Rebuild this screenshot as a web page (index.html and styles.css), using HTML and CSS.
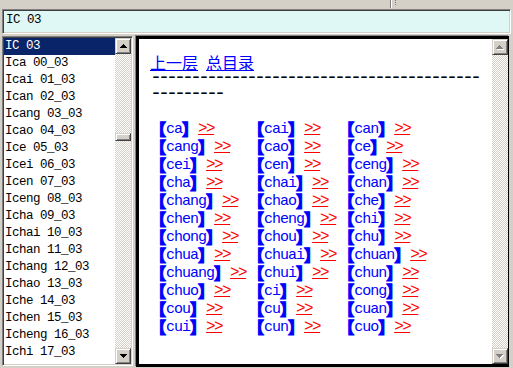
FILE: index.html
```html
<!DOCTYPE html>
<html>
<head>
<meta charset="utf-8">
<title>IC 03</title>
<link rel="stylesheet" href="styles.css">
</head>
<body>
<div class="topbar"><div class="sep"></div><div class="grip"></div></div>
<div class="addr">IC 03</div>
<div class="main">
  <div class="listbox">
    <ul class="list">
      <li class="sel">IC 03</li>
      <li>Ica 00_03</li>
      <li>Icai 01_03</li>
      <li>Ican 02_03</li>
      <li>Icang 03_03</li>
      <li>Icao 04_03</li>
      <li>Ice 05_03</li>
      <li>Icei 06_03</li>
      <li>Icen 07_03</li>
      <li>Iceng 08_03</li>
      <li>Icha 09_03</li>
      <li>Ichai 10_03</li>
      <li>Ichan 11_03</li>
      <li>Ichang 12_03</li>
      <li>Ichao 13_03</li>
      <li>Iche 14_03</li>
      <li>Ichen 15_03</li>
      <li>Icheng 16_03</li>
      <li>Ichi 17_03</li>
    </ul>
    <div class="vscroll">
      <div class="btn"><svg width="7" height="4" viewBox="0 0 7 4"><path d="M3 0h1v1H3zM2 1h3v1H2zM1 2h5v1H1zM0 3h7v1H0z" fill="#000"/></svg></div>
      <div class="track"><div class="thumb"></div></div>
      <div class="btn"><svg width="7" height="4" viewBox="0 0 7 4"><path d="M0 0h7v1H0zM1 1h5v1H1zM2 2h3v1H2zM3 3h1v1H3z" fill="#000"/></svg></div>
    </div>
  </div>
  <div class="view">
    <div class="page">
      <div class="nav"><a href="#">上一层</a><span class="m"> </span><a href="#">总目录</a></div>
      <div class="dash">--------------------------------------------------</div>
      <div class="grid">
        <div class="cell"><span class="b"><span class="br">【</span>ca<span class="br">】</span></span><a class="go" href="#">&gt;&gt;</a></div>
        <div class="cell"><span class="b"><span class="br">【</span>cai<span class="br">】</span></span><a class="go" href="#">&gt;&gt;</a></div>
        <div class="cell"><span class="b"><span class="br">【</span>can<span class="br">】</span></span><a class="go" href="#">&gt;&gt;</a></div>
        <div class="cell"><span class="b"><span class="br">【</span>cang<span class="br">】</span></span><a class="go" href="#">&gt;&gt;</a></div>
        <div class="cell"><span class="b"><span class="br">【</span>cao<span class="br">】</span></span><a class="go" href="#">&gt;&gt;</a></div>
        <div class="cell"><span class="b"><span class="br">【</span>ce<span class="br">】</span></span><a class="go" href="#">&gt;&gt;</a></div>
        <div class="cell"><span class="b"><span class="br">【</span>cei<span class="br">】</span></span><a class="go" href="#">&gt;&gt;</a></div>
        <div class="cell"><span class="b"><span class="br">【</span>cen<span class="br">】</span></span><a class="go" href="#">&gt;&gt;</a></div>
        <div class="cell"><span class="b"><span class="br">【</span>ceng<span class="br">】</span></span><a class="go" href="#">&gt;&gt;</a></div>
        <div class="cell"><span class="b"><span class="br">【</span>cha<span class="br">】</span></span><a class="go" href="#">&gt;&gt;</a></div>
        <div class="cell"><span class="b"><span class="br">【</span>chai<span class="br">】</span></span><a class="go" href="#">&gt;&gt;</a></div>
        <div class="cell"><span class="b"><span class="br">【</span>chan<span class="br">】</span></span><a class="go" href="#">&gt;&gt;</a></div>
        <div class="cell"><span class="b"><span class="br">【</span>chang<span class="br">】</span></span><a class="go" href="#">&gt;&gt;</a></div>
        <div class="cell"><span class="b"><span class="br">【</span>chao<span class="br">】</span></span><a class="go" href="#">&gt;&gt;</a></div>
        <div class="cell"><span class="b"><span class="br">【</span>che<span class="br">】</span></span><a class="go" href="#">&gt;&gt;</a></div>
        <div class="cell"><span class="b"><span class="br">【</span>chen<span class="br">】</span></span><a class="go" href="#">&gt;&gt;</a></div>
        <div class="cell"><span class="b"><span class="br">【</span>cheng<span class="br">】</span></span><a class="go" href="#">&gt;&gt;</a></div>
        <div class="cell"><span class="b"><span class="br">【</span>chi<span class="br">】</span></span><a class="go" href="#">&gt;&gt;</a></div>
        <div class="cell"><span class="b"><span class="br">【</span>chong<span class="br">】</span></span><a class="go" href="#">&gt;&gt;</a></div>
        <div class="cell"><span class="b"><span class="br">【</span>chou<span class="br">】</span></span><a class="go" href="#">&gt;&gt;</a></div>
        <div class="cell"><span class="b"><span class="br">【</span>chu<span class="br">】</span></span><a class="go" href="#">&gt;&gt;</a></div>
        <div class="cell"><span class="b"><span class="br">【</span>chua<span class="br">】</span></span><a class="go" href="#">&gt;&gt;</a></div>
        <div class="cell"><span class="b"><span class="br">【</span>chuai<span class="br">】</span></span><a class="go" href="#">&gt;&gt;</a></div>
        <div class="cell"><span class="b"><span class="br">【</span>chuan<span class="br">】</span></span><a class="go" href="#">&gt;&gt;</a></div>
        <div class="cell"><span class="b"><span class="br">【</span>chuang<span class="br">】</span></span><a class="go" href="#">&gt;&gt;</a></div>
        <div class="cell"><span class="b"><span class="br">【</span>chui<span class="br">】</span></span><a class="go" href="#">&gt;&gt;</a></div>
        <div class="cell"><span class="b"><span class="br">【</span>chun<span class="br">】</span></span><a class="go" href="#">&gt;&gt;</a></div>
        <div class="cell"><span class="b"><span class="br">【</span>chuo<span class="br">】</span></span><a class="go" href="#">&gt;&gt;</a></div>
        <div class="cell"><span class="b"><span class="br">【</span>ci<span class="br">】</span></span><a class="go" href="#">&gt;&gt;</a></div>
        <div class="cell"><span class="b"><span class="br">【</span>cong<span class="br">】</span></span><a class="go" href="#">&gt;&gt;</a></div>
        <div class="cell"><span class="b"><span class="br">【</span>cou<span class="br">】</span></span><a class="go" href="#">&gt;&gt;</a></div>
        <div class="cell"><span class="b"><span class="br">【</span>cu<span class="br">】</span></span><a class="go" href="#">&gt;&gt;</a></div>
        <div class="cell"><span class="b"><span class="br">【</span>cuan<span class="br">】</span></span><a class="go" href="#">&gt;&gt;</a></div>
        <div class="cell"><span class="b"><span class="br">【</span>cui<span class="br">】</span></span><a class="go" href="#">&gt;&gt;</a></div>
        <div class="cell"><span class="b"><span class="br">【</span>cun<span class="br">】</span></span><a class="go" href="#">&gt;&gt;</a></div>
        <div class="cell"><span class="b"><span class="br">【</span>cuo<span class="br">】</span></span><a class="go" href="#">&gt;&gt;</a></div>
      </div>
    </div>
    <div class="vscroll dis">
      <div class="btn"><svg width="8" height="5" viewBox="0 0 8 5"><path d="M4 1h1v1H4zM3 2h3v1H3zM2 3h5v1H2zM1 4h7v1H1z" fill="#fff"/><path d="M3 0h1v1H3zM2 1h3v1H2zM1 2h5v1H1zM0 3h7v1H0z" fill="#808080"/></svg></div>
      <div class="track"></div>
      <div class="btn"><svg width="8" height="5" viewBox="0 0 8 5"><path d="M1 1h7v1H1zM2 2h5v1H2zM3 3h3v1H3zM4 4h1v1H4z" fill="#fff"/><path d="M0 0h7v1H0zM1 1h5v1H1zM2 2h3v1H2zM3 3h1v1H3z" fill="#808080"/></svg></div>
    </div>
  </div>
</div>
</body>
</html>
```

FILE: styles.css
```css
* { box-sizing: border-box; }
html, body {
  margin: 0;
  padding: 0;
}
body {
  width: 513px;
  height: 368px;
  overflow: hidden;
  background: #d4d0c8;
  font-family: "Liberation Mono", monospace;
}

.topbar {
  height: 9px;
  display: flex;
  align-items: flex-start;
}
.sep {
  margin-left: 390px;
  width: 2px;
  height: 8px;
  border-left: 1px solid #808080;
  border-right: 1px solid #ffffff;
}
.grip {
  margin-left: 3px;
  width: 1px;
  height: 5px;
  background: repeating-linear-gradient(#808080 0 1px, transparent 1px 2px);
}

.addr {
  margin: 0 2px;
  height: 25px;
  border: 1px solid;
  border-color: #808080 #ffffff #ffffff #808080;
  box-shadow: inset 1px 1px #404040, inset -1px -1px #d4d0c8;
  background: #e0f8f5;
  padding: 2px 0 0 3px;
  font-size: 12.5px;
  letter-spacing: -0.5px;
  line-height: 17px;
  color: #000;
  white-space: pre;
}

.main {
  display: flex;
  margin-top: 2px;
  height: 332px;
}

.listbox {
  margin-left: 2px;
  width: 131px;
  height: 330px;
  display: flex;
  border: 1px solid;
  border-color: #808080 #ffffff #ffffff #808080;
  box-shadow: inset 1px 1px #404040, inset -1px -1px #d4d0c8;
  padding: 1px;
}
.list {
  list-style: none;
  margin: 0;
  padding: 0;
  flex: 1;
  background: #fff;
  overflow: hidden;
}
.list li {
  height: 17px;
  line-height: 17px;
  padding-left: 1px;
  font-size: 12.5px;
  letter-spacing: -0.5px;
  color: #000;
  white-space: pre;
}
.list li.sel {
  background: #0a246a;
  color: #fff;
}

.vscroll {
  width: 16px;
  display: flex;
  flex-direction: column;
}
.btn {
  width: 16px;
  height: 16px;
  flex: none;
  background: #d4d0c8;
  border: 1px solid;
  border-color: #d4d0c8 #404040 #404040 #d4d0c8;
  box-shadow: inset 1px 1px #ffffff, inset -1px -1px #808080;
  display: flex;
  align-items: center;
  justify-content: center;
}
.btn svg { display: block; shape-rendering: crispEdges; }
.track {
  flex: 1;
  background: repeating-conic-gradient(#ffffff 0 25%, #d4d0c8 0 50%) 0 0 / 2px 2px;
}
.thumb {
  margin-top: 79px;
  height: 8px;
  background: #d4d0c8;
  border: 1px solid;
  border-color: #d4d0c8 #404040 #404040 #d4d0c8;
  box-shadow: inset 1px 1px #ffffff, inset -1px -1px #808080;
}

.view {
  margin-left: 3px;
  width: 373px;
  height: 331px;
  display: flex;
  background: #fff;
  border-style: solid;
  border-color: #000;
  border-width: 3px 1px 3px 3px;
  box-shadow: -1px -1px 0 #808080;
}
.page {
  flex: 1;
  padding: 15px 10px 0 11px;
  overflow: hidden;
}

.nav {
  height: 16px;
  font: 16px/16px "Noto Sans CJK SC", sans-serif;
  white-space: nowrap;
}
.nav a {
  color: #0000ff;
  text-decoration: underline;
}
.m {
  font: 13.333px/16px "Liberation Mono", monospace;
  white-space: pre;
}

.dash {
  font: 20px/16px "Liberation Mono", monospace;
  letter-spacing: -4px;
  color: #000;
  word-break: break-all;
}

.grid {
  margin-top: 19px;
  display: grid;
  grid-template-columns: repeat(3, max-content);
  grid-auto-rows: 16px;
  column-gap: 2px;
  row-gap: 2px;
}
.cell {
  font: 15px/16px "Liberation Mono", monospace;
  letter-spacing: -1px;
  white-space: nowrap;
}
.b { color: #0000ff; }
.br {
  font: 900 16px/0 "Noto Sans CJK SC", sans-serif;
  letter-spacing: 0;
  vertical-align: -2px;
  -webkit-text-stroke: 1.2px #0000ff;
}
.go {
  font-size: 16px;
  letter-spacing: -1.6px;
  color: #ff0000;
  text-decoration: underline;
}
```
